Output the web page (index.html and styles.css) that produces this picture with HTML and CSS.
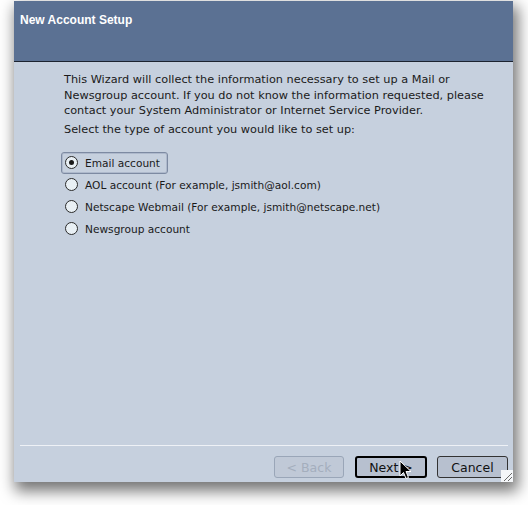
FILE: index.html
```html
<!DOCTYPE html>
<html lang="en">
<head>
    <meta charset="UTF-8">
    <title>New Account Setup</title>
    <link rel="stylesheet" href="styles.css">
</head>
<body>
    <div class="window">
        <div class="header">
            <h1 class="title">New Account Setup</h1>
        </div>
        <div class="content">
            <p class="intro">This Wizard will collect the information necessary to set up a Mail or Newsgroup account. If you do not know the information requested, please contact your System Administrator or Internet Service Provider.</p>
            <p class="prompt">Select the type of account you would like to set up:</p>
            <div class="options">
                <label class="option focused"><span class="radio checked"></span>Email account</label>
                <label class="option"><span class="radio"></span>AOL account (For example, jsmith@aol.com)</label>
                <label class="option"><span class="radio"></span>Netscape Webmail (For example, jsmith@netscape.net)</label>
                <label class="option"><span class="radio"></span>Newsgroup account</label>
            </div>
        </div>
        <div class="footer">
            <button class="btn back" disabled>&lt; Back</button>
            <button class="btn default">Next &gt;</button>
            <button class="btn cancel">Cancel</button>
        </div>
        <svg class="grip" width="12" height="12" viewBox="0 0 12 12">
            <rect width="12" height="12" fill="#f4f6f9"/>
            <path d="M11 3 L3 11 M11 7 L7 11" stroke="#6a6a6a" stroke-width="1"/>
        </svg>
        <svg class="cursor" width="14" height="20" viewBox="0 0 14 20">
            <path d="M1 1 L1 16 L4.5 12.5 L7 18.5 L9.5 17.5 L7 11.5 L12 11.5 Z" fill="#000" stroke="#fff" stroke-width="1"/>
        </svg>
    </div>
</body>
</html>
```

FILE: styles.css
```css
body {
    margin: 0;
    min-height: 505px;
    background-color: #ffffff;
    font-family: "DejaVu Sans", sans-serif;
}

.window {
    position: relative;
    margin: 1px 0 0 14px;
    width: 499px;
    height: 481px;
    display: flex;
    flex-direction: column;
    background-color: #c6d0de;
    box-shadow: 3px 7px 14px 2px rgba(0, 0, 0, 0.55);
}

.header {
    height: 61px;
    background-color: #5b7193;
    border-bottom: 1px solid #1c2330;
    padding: 12px 0 0 6px;
    box-sizing: border-box;
}

.title {
    margin: 0;
    font-family: "Liberation Sans", sans-serif;
    font-size: 12px;
    font-weight: bold;
    color: #ffffff;
}

.content {
    flex: 1;
    padding: 10px 20px 0 50px;
    color: #1a1a1a;
    font-size: 11.3px;
}

.intro {
    margin: 0;
    line-height: 15.5px;
}

.prompt {
    margin: 3px 0 0;
    line-height: 15px;
}

.options {
    margin-top: 15px;
    display: flex;
    flex-direction: column;
    align-items: flex-start;
}

.option {
    display: flex;
    align-items: center;
    gap: 7px;
    height: 20px;
    padding: 0 7px 0 3px;
    border: 1px solid transparent;
    border-radius: 3px;
    margin-left: -3px;
    font-size: 10.6px;
}

.option.focused {
    border-color: #7d8aa2;
    box-shadow: inset 0 0 0 1px #aeb9cc;
}

.radio {
    width: 11px;
    height: 11px;
    border: 1.5px solid #2a2a2a;
    border-radius: 50%;
    background-color: #e9f0f5;
    position: relative;
}

.radio.checked::after {
    content: "";
    position: absolute;
    left: 3px;
    top: 3px;
    width: 5px;
    height: 5px;
    border-radius: 50%;
    background-color: #1a1a1a;
}

.footer {
    margin: 0 5px 0 6px;
    border-top: 1px solid #eef1f6;
    height: 37px;
    box-sizing: border-box;
    display: flex;
    justify-content: flex-end;
    align-items: flex-start;
    gap: 10px;
    padding-top: 10px;
}

.btn {
    width: 72px;
    height: 22px;
    font-family: "DejaVu Sans", sans-serif;
    font-size: 12.5px;
    color: #111;
    background-color: #b7c0cf;
    border: 1px solid #333;
    border-radius: 3px;
    padding: 0;
}

.btn.back {
    width: 70px;
    margin-right: 1px;
}

.btn.cancel {
    width: 71px;
}

.btn:disabled {
    color: #a4aebd;
    border-color: #9aa6b8;
    background-color: #c0c9d7;
}

.btn.default {
    border: 2px solid #000;
}

.grip {
    position: absolute;
    right: 0;
    bottom: 0;
}

.cursor {
    position: absolute;
    left: 385px;
    top: 459px;
}
```
